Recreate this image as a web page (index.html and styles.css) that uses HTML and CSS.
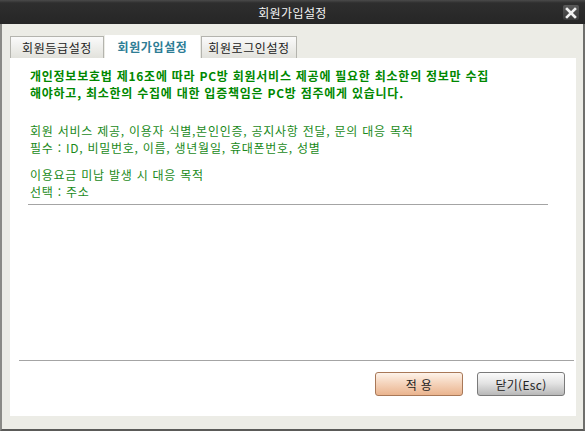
FILE: index.html
```html
<!DOCTYPE html>
<html lang="ko">
<head>
<meta charset="utf-8">
<link rel="stylesheet" href="styles.css">
</head>
<body>
<div class="window">
  <div class="titlebar">
    <span class="title">회원가입설정</span>
    <span class="close"><svg width="14" height="14" viewBox="0 0 14 14"><path d="M3 3 L11 11 M11 3 L3 11" stroke="#f2f2f2" stroke-width="2.6" stroke-linecap="square"/></svg></span>
  </div>
  <div class="body">
    <div class="tabs">
      <div class="tab t1">회원등급설정</div>
      <div class="tab t2 active">회원가입설정</div>
      <div class="tab t3">회원로그인설정</div>
    </div>
    <div class="panel">
      <p class="notice">개인정보보호법 제16조에 따라 PC방 회원서비스 제공에 필요한 최소한의 정보만 수집<br>해야하고, 최소한의 수집에 대한 입증책임은 PC방 점주에게 있습니다.</p>
      <p class="info">회원 서비스 제공, 이용자 식별,본인인증, 공지사항 전달, 문의 대응 목적<br>필수 : ID, 비밀번호, 이름, 생년월일, 휴대폰번호, 성별</p>
      <p class="info">이용요금 미납 발생 시 대응 목적<br>선택 : 주소</p>
      <div class="rule"></div>
      <div class="spacer"></div>
      <div class="rule wide"></div>
      <div class="buttons">
        <button class="btn apply">적 용</button>
        <button class="btn close-btn">닫기(Esc)</button>
      </div>
    </div>
  </div>
</div>
</body>
</html>
```
FILE: styles.css
```css
* { box-sizing: border-box; }
html, body { margin: 0; padding: 0; }
body {
  width: 585px;
  height: 431px;
  font-family: "Noto Sans CJK KR", "DejaVu Sans", sans-serif;
  background: #ecece6;
}
.window {
  width: 585px;
  height: 431px;
  display: flex;
  flex-direction: column;
  border-left: 2px solid #8a8a86;
  border-right: 2px solid #6f6f6c;
  border-bottom: 2px solid #5a5a58;
  background: #ecece6;
}
.titlebar {
  height: 24px;
  background: linear-gradient(#4a4a4a 0, #2e2e2e 3px, #262626 100%);
  display: flex;
  align-items: center;
  justify-content: center;
  position: relative;
  margin: 0 -2px;
}
.title {
  color: #f4f4f4;
  font-size: 12px;
  letter-spacing: 0.4px;
}
.close {
  position: absolute;
  right: 6px;
  top: 5px;
  width: 16px;
  height: 15px;
  background: linear-gradient(#5a5a5a, #3a3a3a);
  border-radius: 2px;
  display: flex;
  align-items: center;
  justify-content: center;
}
.body {
  flex: 1;
  display: flex;
  flex-direction: column;
  padding: 11px 7px 13px 8px;
}
.tabs {
  display: flex;
  height: 23px;
  align-items: flex-end;
}
.tab {
  height: 22px;
  font-size: 12px;
  color: #222;
  display: flex;
  align-items: center;
  justify-content: center;
  border: 1px solid #b4b4ae;
  border-bottom: none;
  background: linear-gradient(#fafafa, #e2e2dc);
  margin-right: 1px;
  letter-spacing: 0.6px;
}
.t1 { width: 94px; }
.t2 { width: 95px; }
.t3 { width: 96px; }
.tab.active {
  height: 23px;
  background: #fff;
  border: none;
  color: #2e7d95;
  font-weight: bold;
}
.panel {
  flex: 1;
  background: #fff;
  display: flex;
  flex-direction: column;
  padding: 9px 7px 17px 9px;
}
.notice {
  margin: 0 0 0 11px;
  color: #008800;
  font-weight: bold;
  font-size: 12px;
  line-height: 17px;
  letter-spacing: 0.75px;
}
.info {
  margin: 0 0 0 11px;
  color: #1a8a1a;
  font-size: 12px;
  line-height: 17px;
  letter-spacing: 0.75px;
}
.notice + .info { margin-top: 21px; }
.info + .info { margin-top: 10px; }
.rule {
  height: 1px;
  background: #a4a4a4;
  margin: 4px 21px 0 9px;
}
.spacer { flex: 1; }
.rule.wide { margin: 0 -5px 0 0; }
.buttons {
  display: flex;
  justify-content: flex-end;
  gap: 14px;
  margin-top: 11px;
  margin-bottom: 3px;
  padding-right: 4px;
}
.btn {
  width: 88px;
  height: 24px;
  font-family: "Noto Sans CJK KR", "DejaVu Sans", sans-serif;
  font-size: 12px;
  color: #222;
  border-radius: 3px;
  padding: 0;
  letter-spacing: 0.3px;
}
.apply {
  border: 1px solid #a87858;
  background: linear-gradient(#fdf3ea 0, #f6d8c2 40%, #eab48e 100%);
}
.close-btn {
  border: 1px solid #7a7a7a;
  background: linear-gradient(#fbfbfb 0, #e4e4e4 45%, #b8b8b8 100%);
}
```
